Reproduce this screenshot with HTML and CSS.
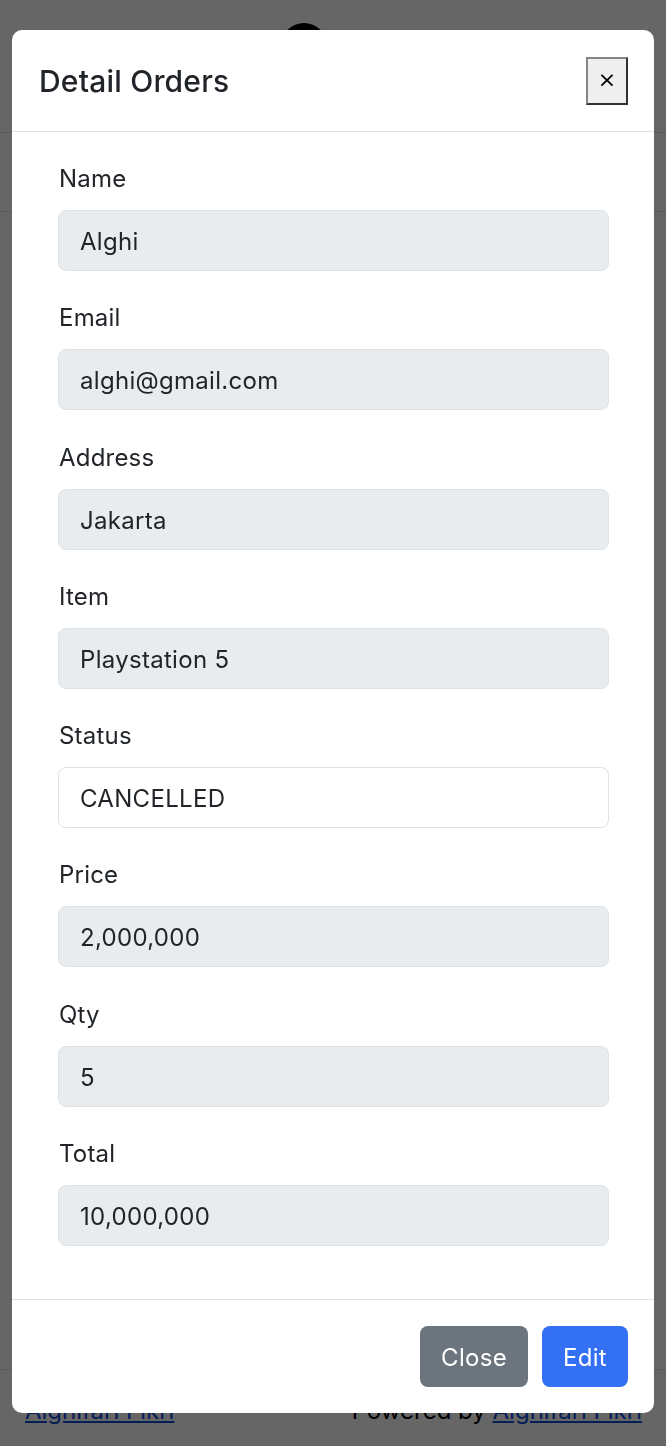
FILE: index.html
```html
<!DOCTYPE html>
<html lang="en">
<head>
<meta charset="utf-8">
<title>Detail Orders</title>
<link rel="stylesheet" href="styles.css">
</head>
<body>
<div class="page">
  <header class="topbar">
    <div class="avatar"></div>
  </header>
  <div class="subbar"></div>
  <main class="content"></main>
  <footer class="site-footer">
    <a href="#" class="flink">Alghifari Fikri</a>
    <span class="powered">Powered by <a href="#" class="flink">Alghifari Fikri</a></span>
  </footer>
</div>

<div class="backdrop">
  <div class="modal">
    <div class="modal-header">
      <h5 class="modal-title">Detail Orders</h5>
      <button class="x-btn" type="button">×</button>
    </div>
    <div class="modal-body">
      <div class="field">
        <label class="label">Name</label>
        <div class="input disabled">Alghi</div>
      </div>
      <div class="field">
        <label class="label">Email</label>
        <div class="input disabled">alghi@gmail.com</div>
      </div>
      <div class="field">
        <label class="label">Address</label>
        <div class="input disabled">Jakarta</div>
      </div>
      <div class="field">
        <label class="label">Item</label>
        <div class="input disabled">Playstation 5</div>
      </div>
      <div class="field">
        <label class="label">Status</label>
        <div class="input">CANCELLED</div>
      </div>
      <div class="field">
        <label class="label">Price</label>
        <div class="input disabled">2,000,000</div>
      </div>
      <div class="field">
        <label class="label">Qty</label>
        <div class="input disabled">5</div>
      </div>
      <div class="field">
        <label class="label">Total</label>
        <div class="input disabled">10,000,000</div>
      </div>
    </div>
    <div class="modal-footer">
      <button class="btn btn-secondary" type="button">Close</button>
      <button class="btn btn-primary" type="button">Edit</button>
    </div>
  </div>
</div>
</body>
</html>
```
FILE: styles.css
```css
* { box-sizing: border-box; }
html, body { margin: 0; padding: 0; }
body {
  font-family: Inter, "Liberation Sans", sans-serif;
  color: #212529;
  background: #ffffff;
  width: 666px;
  height: 1446px;
  overflow: hidden;
}
.page {
  height: 1446px;
  display: flex;
  flex-direction: column;
}
.topbar {
  height: 133px;
  border-bottom: 1px solid #e5e5e5;
  display: flex;
  justify-content: center;
}
.avatar {
  margin-top: 23px;
  margin-right: 58px;
  width: 46px;
  height: 46px;
  border-radius: 50%;
  background: #000;
}
.subbar {
  height: 79px;
  border-bottom: 1px solid #e5e5e5;
}
.content { flex: 1; border-bottom: 1px solid #e5e5e5; }
.site-footer {
  height: 76px;
  display: flex;
  justify-content: space-between;
  padding: 26px 24px 0 25px;
  font-size: 24px;
  color: #000;
}
.flink { color: #0d4fd8; text-decoration: underline; }

.backdrop {
  position: fixed;
  inset: 0;
  background: rgba(0, 0, 0, 0.6);
  padding: 30px 12px 33px;
}
.modal {
  background: #fff;
  border-radius: 10px;
  height: 1383px;
  display: flex;
  flex-direction: column;
  overflow: hidden;
}
.modal-header {
  height: 102px;
  border-bottom: 1px solid #dee2e6;
  display: flex;
  align-items: center;
  justify-content: space-between;
  padding: 0 26px 0 27px;
}
.modal-title {
  margin: 0;
  font-size: 30px;
  font-weight: 500;
  letter-spacing: 0.2px;
  color: #212529;
}
.x-btn {
  width: 42px;
  height: 48px;
  padding: 0 0 2px;
  background: #efefef;
  border: 2px solid;
  border-color: #858585 #333 #333 #858585;
  font-family: "DejaVu Sans", sans-serif;
  font-size: 22px;
  color: #000;
  line-height: 1;
}
.modal-body {
  flex: 1;
  padding: 28px 45px 0 46px;
  display: flex;
  flex-direction: column;
  gap: 28.3px;
}
.field { display: flex; flex-direction: column; }
.label {
  font-size: 24px;
  line-height: 36px;
  letter-spacing: 0.2px;
  margin-left: 1px;
  padding-top: 1px;
  margin-bottom: 13px;
  color: #212529;
}
.input {
  height: 61px;
  border: 1px solid #dee2e6;
  border-radius: 8px;
  background: #fff;
  padding: 2px 21px 0;
  display: flex;
  align-items: center;
  font-size: 24px;
  letter-spacing: 0.3px;
  color: #212529;
}
.input.disabled { background: #e9ecef; }
.modal-footer {
  border-top: 1px solid #dee2e6;
  padding: 26px 26px 26px;
  display: flex;
  justify-content: flex-end;
  gap: 14px;
}
.btn {
  height: 61px;
  padding: 2px 21px 0;
  border: none;
  border-radius: 8px;
  font-family: Inter, "Liberation Sans", sans-serif;
  font-size: 24px;
  letter-spacing: 0.3px;
  color: #fff;
}
.btn-secondary { background: #6c757d; }
.btn-primary { background: #3370f4; }
```
